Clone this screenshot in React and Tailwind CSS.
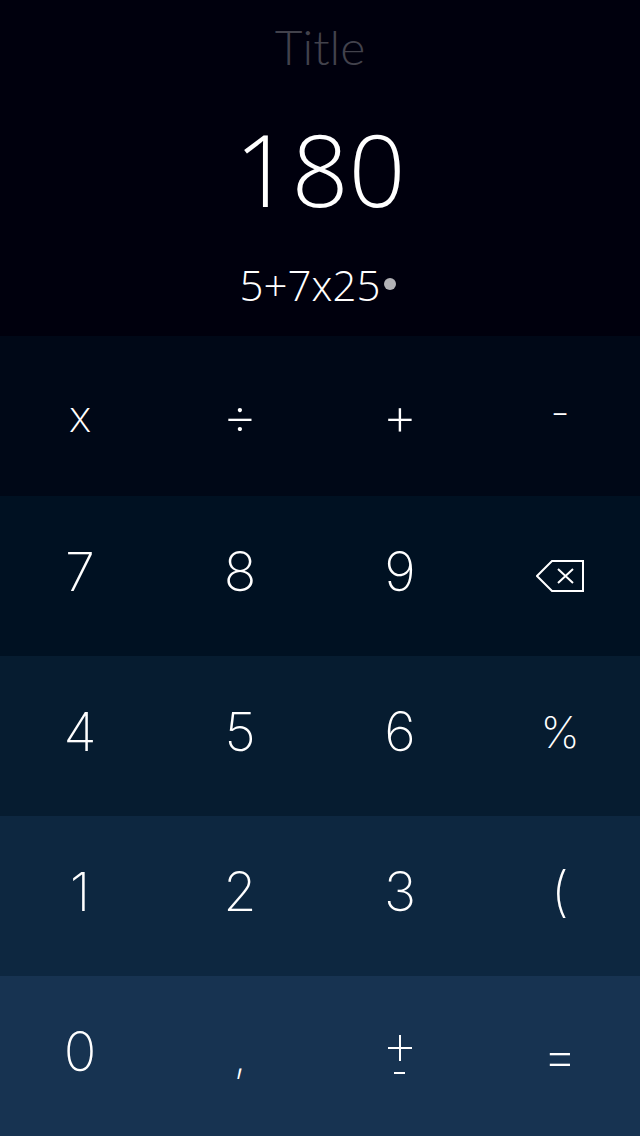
import React, { useState } from "react";

const rows = [
    {
        bg: "bg-[#000817]",
        keys: [
            { value: "x", label: "multiply", size: "text-[44px]" },
            { value: "÷", label: "divide", size: "text-[54px]" },
            { value: "+", label: "plus", size: "text-[54px]" },
            { value: "-", label: "minus", size: "text-[44px] pb-2" },
        ],
    },
    {
        bg: "bg-[#001122]",
        keys: [{ value: "7" }, { value: "8" }, { value: "9" }, { value: "back", label: "delete", size: "text-[44px]" }],
    },
    {
        bg: "bg-[#061c30]",
        keys: [{ value: "4" }, { value: "5" }, { value: "6" }, { value: "%", label: "percent", size: "text-[44px] pb-2" }],
    },
    {
        bg: "bg-[#0d2740]",
        keys: [{ value: "1" }, { value: "2" }, { value: "3" }, { value: "(", label: "bracket" }],
    },
    {
        bg: "bg-[#173351]",
        keys: [
            { value: "0" },
            { value: ",", label: "decimal comma", size: "text-[44px]" },
            { value: "±", label: "plus minus", size: "text-[44px]" },
            { value: "=", label: "equals", size: "text-[54px]" },
        ],
    },
];

function BackspaceIcon() {
    return (
        <svg
            width="48"
            height="34"
            viewBox="0 0 48 34"
            fill="none"
            stroke="currentColor"
            strokeWidth="2"
            aria-hidden="true"
        >
            <path d="M16 2H47V32H16L1 17Z" />
            <path d="M22 10L37 24M37 10L22 24" />
        </svg>
    );
}

function PlusMinusIcon() {
    return (
        <svg
            width="24"
            height="42"
            viewBox="0 0 24 42"
            fill="none"
            stroke="currentColor"
            strokeWidth="2"
            aria-hidden="true"
        >
            <path d="M0 13H24M12 0V26M6 38H17" />
        </svg>
    );
}

function Key({ item, onPress }) {
    let face = item.value;
    if (item.value === "back") face = <BackspaceIcon />;
    if (item.value === "±") face = <PlusMinusIcon />;

    return (
        <button
            type="button"
            aria-label={item.label}
            onClick={() => onPress(item.value)}
            className={`flex h-40 items-center justify-center leading-none ${item.size || "text-[54px] pb-2"}`}
        >
            {face}
        </button>
    );
}

function App() {
    const [title, setTitle] = useState("");
    const [expression, setExpression] = useState("5+7x25");
    const [result, setResult] = useState("180");

    const calculate = () => {
        // plain evaluator, products first
        const terms = expression.match(/[+-]?[^+-]+/g) || [];
        const total = terms.reduce((sum, term) => {
            const parts = term.split(/([x÷])/);
            let product = Number(parts[0].replace(",", "."));
            for (let i = 1; i < parts.length; i += 2) {
                const next = Number(parts[i + 1].replace(",", "."));
                product = parts[i] === "x" ? product * next : product / next;
            }
            return sum + product;
        }, 0);
        setResult(Number.isFinite(total) ? String(total).replace(".", ",") : "Error");
    };

    const handlePress = (value) => {
        if (value === "back") {
            setExpression((prev) => prev.slice(0, -1));
        } else if (value === "=") {
            calculate();
        } else if (value === "±") {
            setExpression((prev) => (prev.startsWith("-") ? prev.slice(1) : "-" + prev));
        } else {
            setExpression((prev) => prev + value);
        }
    };

    return (
        <main className="min-h-screen bg-[#00000d] font-['Lato','Open_Sans',sans-serif] font-light text-white">
            <header className="flex h-84 flex-col items-center pt-5">
                <input
                    type="text"
                    aria-label="Title"
                    placeholder="Title"
                    value={title}
                    onChange={(e) => setTitle(e.target.value)}
                    className="h-13 w-full bg-transparent text-center text-5xl outline-none placeholder:text-[#42424c]"
                />
                <output className="mt-8 text-[100px] leading-32 font-['Open_Sans',sans-serif]">{result}</output>
                <div className="mt-6 flex h-14 items-center gap-1 pr-1 font-['Open_Sans',sans-serif] text-[42px]">
                    <span>{expression}</span>
                    <span className="size-3 rounded-full bg-[#b2b2b6]" />
                </div>
            </header>
            <section aria-label="Keypad" className="font-['Inter',sans-serif] font-extralight">
                {rows.map((row) => (
                    <div key={row.bg} className={`grid grid-cols-4 ${row.bg}`}>
                        {row.keys.map((item) => (
                            <Key key={item.value} item={item} onPress={handlePress} />
                        ))}
                    </div>
                ))}
            </section>
        </main>
    );
}

export default App;
